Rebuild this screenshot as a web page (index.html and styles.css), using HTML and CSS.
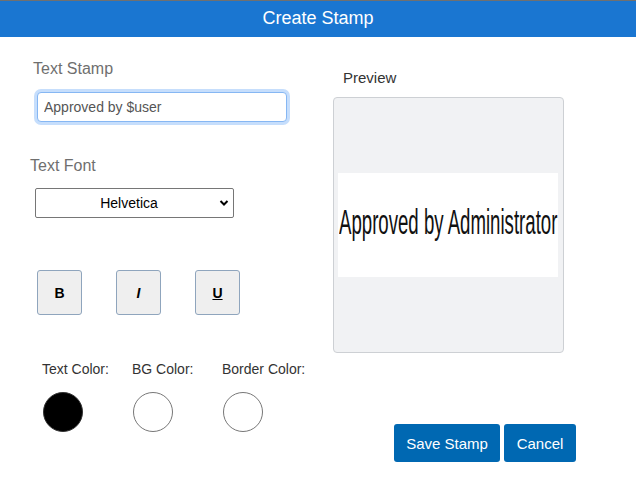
FILE: index.html
```html
<!DOCTYPE html>
<html>
<head>
<meta charset="utf-8">
<link rel="stylesheet" href="styles.css">
</head>
<body>
<header class="title-bar">Create Stamp</header>
<main class="content">
  <section class="left-col">
    <label class="field-label stamp-label">Text Stamp</label>
    <input class="text-input" type="text" value="Approved by $user">
    <label class="field-label font-label">Text Font</label>
    <div class="select-wrap">
      <select class="font-select">
        <option>Helvetica</option>
      </select>
      <svg class="chevron" width="10" height="8" viewBox="0 0 10 8"><path d="M1.5 2 L5 5.5 L8.5 2" fill="none" stroke="#000" stroke-width="2"/></svg>
    </div>
    <div class="style-row">
      <button class="style-btn bold">B</button>
      <button class="style-btn italic">I</button>
      <button class="style-btn underline">U</button>
    </div>
    <div class="colors">
      <div class="color-col">
        <span class="color-label">Text Color:</span>
        <span class="swatch black"></span>
      </div>
      <div class="color-col">
        <span class="color-label">BG Color:</span>
        <span class="swatch white"></span>
      </div>
      <div class="color-col">
        <span class="color-label">Border Color:</span>
        <span class="swatch white"></span>
      </div>
    </div>
  </section>
  <section class="right-col">
    <div class="preview-label">Preview</div>
    <div class="preview-box">
      <div class="stamp">
        <span class="stamp-text">Approved by Administrator</span>
      </div>
    </div>
    <div class="actions">
      <button class="primary-btn save">Save Stamp</button>
      <button class="primary-btn cancel">Cancel</button>
    </div>
  </section>
</main>
</body>
</html>
```
FILE: styles.css
```css
* { box-sizing: border-box; }
html, body { margin: 0; padding: 0; background: #fff; }
body {
  font-family: "Liberation Sans", Arial, sans-serif;
  width: 636px;
  height: 482px;
  overflow: hidden;
  border-top: 1px solid #707070;
}
.title-bar {
  height: 36px;
  line-height: 35px;
  background: #1a76d1;
  color: #fff;
  font-size: 18px;
  text-align: center;
}
.content {
  display: flex;
  padding-left: 30px;
}
.left-col {
  width: 303px;
  display: flex;
  flex-direction: column;
  align-items: flex-start;
}
.field-label {
  font-size: 16px;
  line-height: 18px;
  color: #6f6f6f;
}
.stamp-label { margin-top: 23px; margin-left: 3px; }
.text-input {
  margin-top: 14px;
  margin-left: 7px;
  width: 250px;
  height: 30px;
  border: 1px solid #86b7f3;
  border-radius: 4px;
  box-shadow: 0 0 0 3px #c6defc;
  padding: 0 6px;
  font: 14px "Liberation Sans", Arial, sans-serif;
  color: #555;
  outline: none;
}
.font-label { margin-top: 35px; margin-left: 0; }
.select-wrap {
  position: relative;
  margin-top: 13px;
  margin-left: 5px;
}
.font-select {
  -webkit-appearance: none;
  appearance: none;
  width: 199px;
  height: 30px;
  border: 1px solid #767676;
  border-radius: 2px;
  background: #fff;
  font: 14px "Liberation Sans", Arial, sans-serif;
  color: #000;
  text-align: center;
  text-align-last: center;
  padding: 0 15px 0 4px;
}
.chevron {
  position: absolute;
  right: 5px;
  top: 11px;
  pointer-events: none;
}
.style-row {
  display: flex;
  gap: 34px;
  margin-top: 52px;
  margin-left: 7px;
}
.style-btn {
  width: 45px;
  height: 45px;
  background: #efefef;
  border: 1px solid #8fa5bd;
  border-radius: 3px;
  font: bold 14px "Liberation Sans", Arial, sans-serif;
  color: #000;
  padding: 0;
}
.style-btn.italic { font-style: italic; }
.style-btn.underline { text-decoration: underline; }
.colors {
  display: flex;
  margin-top: 46px;
  margin-left: 12px;
}
.color-col {
  width: 90px;
  display: flex;
  flex-direction: column;
  align-items: flex-start;
}
.color-label {
  font-size: 14px;
  line-height: 16px;
  color: #333;
  white-space: nowrap;
}
.swatch {
  display: block;
  width: 40px;
  height: 40px;
  border-radius: 50%;
  margin-top: 15px;
  margin-left: 1px;
}
.swatch.black { background: #000; border: 1px solid #333; }
.swatch.white { background: #fff; border: 1px solid #777; }
.right-col {
  width: 243px;
  display: flex;
  flex-direction: column;
}
.preview-label {
  margin-top: 32px;
  margin-left: 10px;
  font-size: 15px;
  line-height: 17px;
  color: #333;
}
.preview-box {
  margin-top: 11px;
  width: 231px;
  height: 256px;
  background: #f1f2f4;
  border: 1px solid #cdd0d4;
  border-radius: 4px;
  display: flex;
  align-items: center;
  padding-left: 4px;
}
.stamp {
  width: 220px;
  height: 104px;
  background: #fff;
  display: flex;
  align-items: center;
  overflow: hidden;
}
.stamp-text {
  display: block;
  font-size: 35px;
  line-height: 40px;
  color: #111;
  white-space: nowrap;
  transform: scaleX(0.532);
  transform-origin: 0 50%;
  margin-left: 1px;
  margin-bottom: 6px;
}
.actions {
  margin-top: 71px;
  display: flex;
  justify-content: flex-end;
  gap: 4px;
}
.primary-btn {
  height: 38px;
  padding: 0 12px;
  background: #0068b2;
  color: #fff;
  border: none;
  border-radius: 3px;
  font: 15px "Liberation Sans", Arial, sans-serif;
}
.save { width: 106px; }
.cancel { width: 72px; }
```
